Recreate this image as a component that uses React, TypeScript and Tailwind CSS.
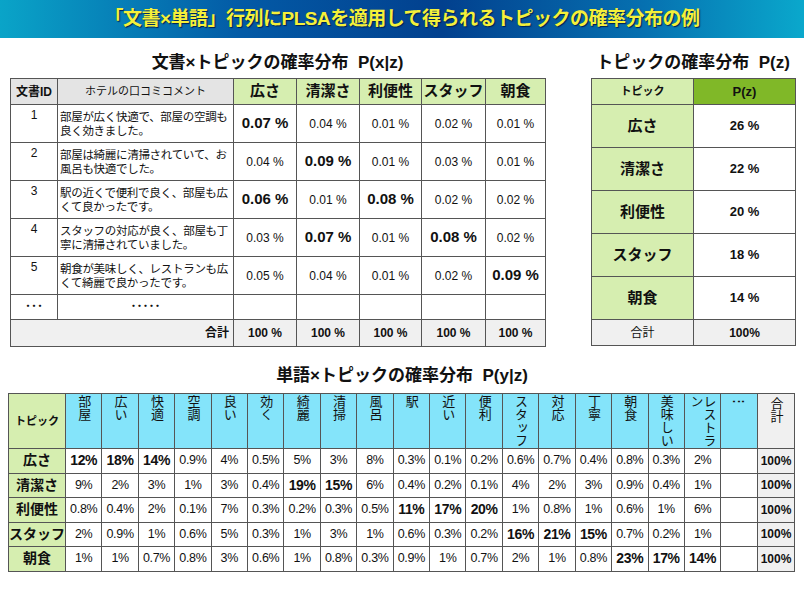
import React from "react";

const F = { fontFamily: '"Liberation Sans","Noto Sans CJK JP",sans-serif' };
const B = "border border-[#555]";

const docs = [
  ["1", "部屋が広く快適で、部屋の空調も良く効きました。", ["0.07 %", "0.04 %", "0.01 %", "0.02 %", "0.01 %"]],
  ["2", "部屋は綺麗に清掃されていて、お風呂も快適でした。", ["0.04 %", "0.09 %", "0.01 %", "0.03 %", "0.01 %"]],
  ["3", "駅の近くで便利で良く、部屋も広くて良かったです。", ["0.06 %", "0.01 %", "0.08 %", "0.02 %", "0.02 %"]],
  ["4", "スタッフの対応が良く、部屋も丁寧に清掃されていました。", ["0.03 %", "0.07 %", "0.01 %", "0.08 %", "0.02 %"]],
  ["5", "朝食が美味しく、レストランも広くて綺麗で良かったです。", ["0.05 %", "0.04 %", "0.01 %", "0.02 %", "0.09 %"]],
] as const;
const boldMap: Record<string, number[]> = { "1": [0], "2": [1], "3": [0, 2], "4": [1, 3], "5": [4] };

const topics = ["広さ", "清潔さ", "利便性", "スタッフ", "朝食"];
const pz = ["26 %", "22 %", "20 %", "18 %", "14 %"];
const words = ["部屋", "広い", "快適", "空調", "良い", "効く", "綺麗", "清掃", "風呂", "駅", "近い", "便利", "スタッフ", "対応", "丁寧", "朝食", "美味しい", "レストラン", "⋮"];
const py = [
  ["12%", "18%", "14%", "0.9%", "4%", "0.5%", "5%", "3%", "8%", "0.3%", "0.1%", "0.2%", "0.6%", "0.7%", "0.4%", "0.8%", "0.3%", "2%"],
  ["9%", "2%", "3%", "1%", "3%", "0.4%", "19%", "15%", "6%", "0.4%", "0.2%", "0.1%", "4%", "2%", "3%", "0.9%", "0.4%", "1%"],
  ["0.8%", "0.4%", "2%", "0.1%", "7%", "0.3%", "0.2%", "0.3%", "0.5%", "11%", "17%", "20%", "1%", "0.8%", "1%", "0.6%", "1%", "6%"],
  ["2%", "0.9%", "1%", "0.6%", "5%", "0.3%", "1%", "3%", "1%", "0.6%", "0.3%", "0.2%", "16%", "21%", "15%", "0.7%", "0.2%", "1%"],
  ["1%", "1%", "0.7%", "0.8%", "3%", "0.6%", "1%", "0.8%", "0.3%", "0.9%", "1%", "0.7%", "2%", "1%", "0.8%", "23%", "17%", "14%"],
];
const pyBold = [[0, 1, 2], [6, 7], [9, 10, 11], [12, 13, 14], [15, 16, 17]];

export default function App() {
  return (
    <div className="w-[804px] h-[589px] bg-white overflow-hidden" style={F}>
      <div className="h-[38px] flex items-center justify-center bg-[linear-gradient(90deg,#0aa4c8_0%,#035aa6_30%,#02408e_55%,#0670b0_80%,#0aa8cc_100%)]">
        <span className="text-[19px] font-bold text-[#f4f03a] tracking-[-0.5px] [text-shadow:1px_1px_1px_#002050]">「文書×単語」行列にPLSAを適用して得られるトピックの確率分布の例</span>
      </div>
      <div className="flex mt-[12px]">
        <div className="ml-[10px] w-[535px]">
          <div className="h-[28px] text-center text-[17px] font-bold text-[#111]">文書×トピックの確率分布&nbsp; P(x|z)</div>
          <table className="border-collapse w-[535px] table-fixed text-[#111]">
            <colgroup>
              <col className="w-[47px]" /><col className="w-[176px]" /><col className="w-[63px]" /><col className="w-[63px]" /><col className="w-[62px]" /><col className="w-[64px]" /><col className="w-[60px]" />
            </colgroup>
            <thead>
              <tr className="h-[26px]">
                <th className={`${B} bg-[#e4e4e4] text-[12px] font-bold p-0`}>文書ID</th>
                <th className={`${B} bg-[#e4e4e4] text-[11px] font-normal`}>ホテルの口コミコメント</th>
                {topics.map((t) => (
                  <th key={t} className={`${B} bg-[#d6eeb0] text-[15px] font-bold`}>{t}</th>
                ))}
              </tr>
            </thead>
            <tbody>
              {docs.map((d) => (
                <tr key={d[0]} className="h-[38px]">
                  <td className={`${B} text-center align-top text-[12px] pt-[1px]`}>{d[0]}</td>
                  <td className={`${B} text-[11.5px] leading-[14px] pl-[2px] pr-0 align-middle tracking-[-0.3px]`}>{d[1]}</td>
                  {d[2].map((v, i) => {
                    const b = boldMap[d[0]].includes(i);
                    return (
                      <td key={i} className={`${B} text-center ${b ? "text-[15px] font-bold" : "text-[12px]"}`}>{v}</td>
                    );
                  })}
                </tr>
              ))}
              <tr className="h-[25px]">
                <td className={`${B} text-center text-[12px] font-bold`}>･･･</td>
                <td className={`${B} text-center text-[12px] font-bold`}>･････</td>
                {[0, 1, 2, 3, 4].map((i) => <td key={i} className={B}></td>)}
              </tr>
              <tr className="h-[27px] bg-[#f0f0f0]">
                <td colSpan={2} className={`${B} text-right pr-[4px] text-[12px] font-bold`}>合計</td>
                {[0, 1, 2, 3, 4].map((i) => (
                  <td key={i} className={`${B} text-center text-[12px] font-bold`}>100 %</td>
                ))}
              </tr>
            </tbody>
          </table>
        </div>
        <div className="ml-[46px] w-[204px]">
          <div className="h-[28px] text-center text-[17px] font-bold text-[#111]">トピックの確率分布&nbsp; P(z)</div>
          <table className="border-collapse w-[204px] table-fixed text-[#111]">
            <colgroup><col className="w-[102px]" /><col className="w-[102px]" /></colgroup>
            <thead>
              <tr className="h-[26px]">
                <th className={`${B} bg-[#d6eeb0] text-[11px] font-bold`}>トピック</th>
                <th className={`${B} bg-[#80b828] text-[13px] font-bold`}>P(z)</th>
              </tr>
            </thead>
            <tbody>
              {topics.map((t, i) => (
                <tr key={t} className="h-[43px]">
                  <td className={`${B} bg-[#d6eeb0] text-center text-[15px] font-bold`}>{t}</td>
                  <td className={`${B} text-center text-[13px] font-bold`}>{pz[i]}</td>
                </tr>
              ))}
              <tr className="h-[26px] bg-[#f0f0f0]">
                <td className={`${B} text-center text-[12px]`}>合計</td>
                <td className={`${B} text-center text-[12px] font-bold`}>100%</td>
              </tr>
            </tbody>
          </table>
        </div>
      </div>
      <div className="mt-[16px] h-[30px] text-center text-[17px] font-bold text-[#111]">単語×トピックの確率分布&nbsp; P(y|z)</div>
      <table className="ml-[8px] border-collapse w-[787px] table-fixed text-[#111]">
        <colgroup>
          <col className="w-[57px]" />
          {words.map((w) => <col key={w} />)}
          <col className="w-[37px]" />
        </colgroup>
        <thead>
          <tr className="h-[55px]">
            <th className={`${B} bg-[#d6eeb0] text-[11px] font-bold`}>トピック</th>
            {words.map((w) => (
              <th key={w} className={`${B} bg-[#84e4fa] align-top p-0 text-left`}>
                <div className="flex justify-center pt-[1px]">
                  <div className="[writing-mode:vertical-rl] h-[52px] text-[13px] leading-[13px] font-normal text-[#111] text-left">{w}</div>
                </div>
              </th>
            ))}
            <th className={`${B} bg-[#f0f0f0] align-top p-0 text-left`}>
              <div className="flex justify-center pt-[3px]">
                <div className="[writing-mode:vertical-rl] text-[13px] leading-[13px] font-normal text-left">合計</div>
              </div>
            </th>
          </tr>
        </thead>
        <tbody>
          {topics.map((t, r) => (
            <tr key={t} className="h-[24.5px]">
              <td className={`${B} bg-[#d6eeb0] text-center text-[14px] font-bold whitespace-nowrap`}>{t}</td>
              {words.map((w, c) => {
                const v = py[r][c];
                const b = pyBold[r].includes(c);
                return (
                  <td key={w} className={`${B} text-center p-0 whitespace-nowrap tracking-tight ${b ? "text-[14px] font-bold" : "text-[12.5px]"}`}>{v ?? ""}</td>
                );
              })}
              <td className={`${B} bg-[#f0f0f0] text-center text-[12px] font-bold p-0`}>100%</td>
            </tr>
          ))}
        </tbody>
      </table>
    </div>
  );
}
